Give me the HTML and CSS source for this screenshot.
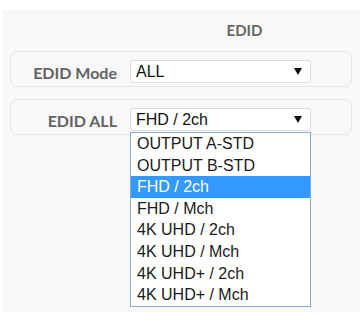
FILE: index.html
```html
<!DOCTYPE html>
<html>
<head>
<meta charset="utf-8">
<link rel="stylesheet" href="styles.css">
</head>
<body>
<div class="panel">
  <div class="head"><span></span><h2 class="title">EDID</h2></div>
  <div class="row">
    <span class="label">EDID Mode</span>
    <div class="selwrap">
      <div class="sel"><span>ALL</span><i class="arrow"></i></div>
    </div>
  </div>
  <div class="row">
    <span class="label">EDID ALL</span>
    <div class="selwrap">
      <div class="sel"><span>FHD / 2ch</span><i class="arrow"></i></div>
      <ul class="list">
        <li>OUTPUT A-STD</li>
        <li>OUTPUT B-STD</li>
        <li class="on">FHD / 2ch</li>
        <li>FHD / Mch</li>
        <li>4K UHD / 2ch</li>
        <li>4K UHD / Mch</li>
        <li>4K UHD+ / 2ch</li>
        <li>4K UHD+ / Mch</li>
      </ul>
    </div>
  </div>
</div>
</body>
</html>
```

FILE: styles.css
```css
* { box-sizing: border-box; }
body {
  margin: 0;
  background: #ffffff;
  font-family: Lato, "Open Sans", sans-serif;
}
.panel {
  margin: 10px 0 0 3px;
  height: 302px;
  background: #f8f8f8;
  padding: 11px 8px 0 7px;
}
.head {
  display: grid;
  grid-template-columns: 120px 1fr;
  margin-right: -7px;
  margin-bottom: 12px;
}
.title {
  margin: 0;
  text-align: center;
  font-size: 15px;
  line-height: 18px;
  font-weight: 700;
  color: #666;
}
.row {
  display: grid;
  grid-template-columns: 106px 181px;
  column-gap: 13px;
  align-items: center;
  border: 1px solid #e4e4e4;
  border-radius: 7px;
  padding: 8px 0 3px 0;
  margin-bottom: 12px;
}
.label {
  text-align: right;
  font-size: 16px;
  font-weight: 700;
  color: #646464;
  padding-top: 1px;
  white-space: nowrap;
}
.selwrap {
  position: relative;
}
.sel {
  height: 23px;
  background: #fff;
  border: 1px solid #dcdcdc;
  border-radius: 3px;
  display: flex;
  align-items: center;
  justify-content: space-between;
  padding: 0 8px 0 5px;
  font-family: "Liberation Sans", Arial, sans-serif;
  font-size: 16px;
  color: #111;
}
.arrow {
  width: 0;
  height: 0;
  border-left: 4px solid transparent;
  border-right: 4px solid transparent;
  border-top: 7px solid #111;
}
.list {
  position: absolute;
  top: 100%;
  left: 0;
  width: 181px;
  margin: 1px 0 0 0;
  padding: 0;
  list-style: none;
  background: #fff;
  border: 1px solid #8ea9d6;
  font-family: "Liberation Sans", Arial, sans-serif;
  font-size: 16px;
  color: #1a1a1a;
  z-index: 2;
}
.list li {
  height: 21.6px;
  line-height: 21.6px;
  padding-left: 6px;
}
.list li.on {
  background: #3399ff;
  color: #fff;
}
```
